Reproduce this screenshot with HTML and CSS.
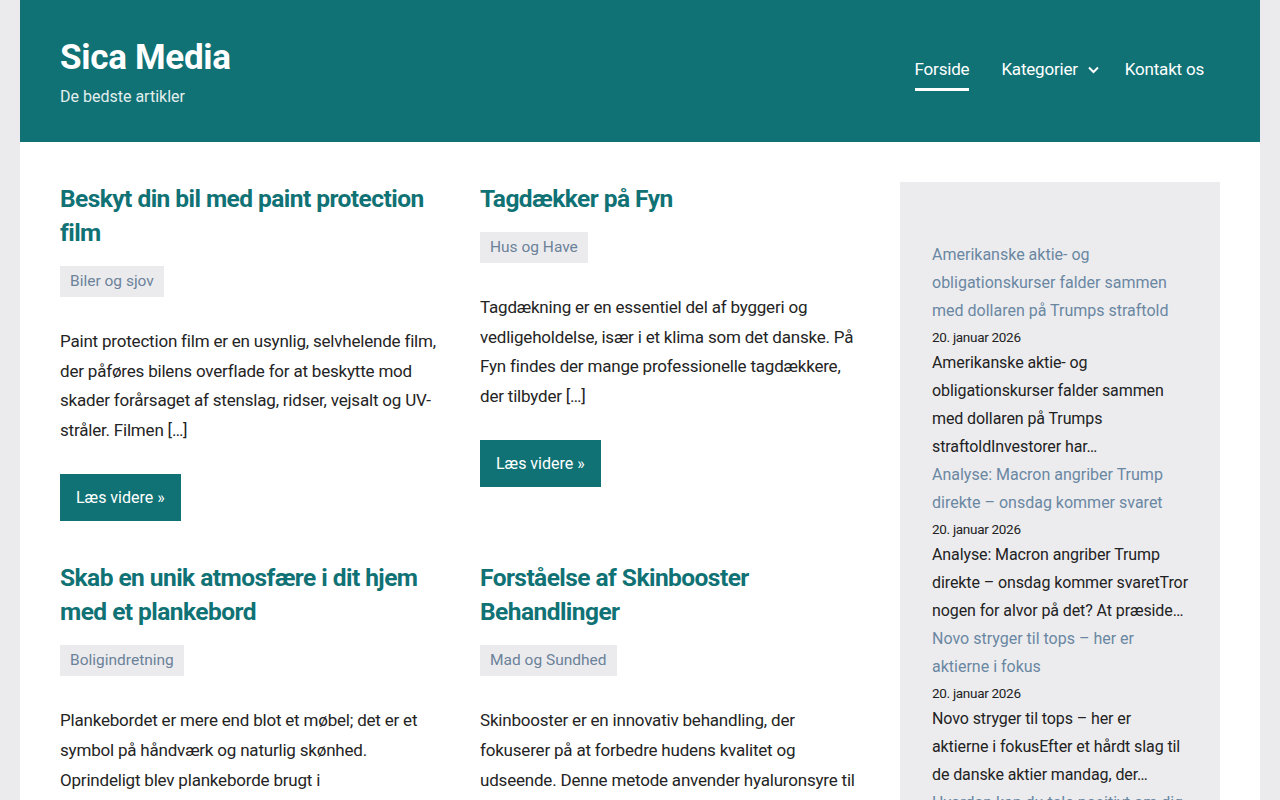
FILE: index.html
```html
<!DOCTYPE html>
<html lang="da">
<head>
<meta charset="utf-8">
<title>Sica Media</title>
<link rel="stylesheet" href="styles.css">
</head>
<body>
<div class="page">
  <header class="site-header">
    <div class="branding">
      <div class="site-title">Sica Media</div>
      <div class="site-desc">De bedste artikler</div>
    </div>
    <nav class="main-nav">
      <a class="nav-item current" href="#">Forside</a>
      <a class="nav-item has-sub" href="#">Kategorier
        <svg class="chev" width="11" height="8" viewBox="0 0 11 8"><path d="M1 1.5 L5.5 6 L10 1.5" fill="none" stroke="#fff" stroke-width="2"/></svg>
      </a>
      <a class="nav-item" href="#">Kontakt os</a>
    </nav>
  </header>
  <div class="content">
    <main class="posts">
      <article class="post">
        <h2 class="post-title">Beskyt din bil med paint protection film</h2>
        <div class="post-meta"><span class="cat">Biler og sjov</span></div>
        <p class="excerpt">Paint protection film er en usynlig, selvhelende film, der påføres bilens overflade for at beskytte mod skader forårsaget af stenslag, ridser, vejsalt og UV-stråler. Filmen [&hellip;]</p>
        <a class="more" href="#">Læs videre »</a>
      </article>
      <article class="post">
        <h2 class="post-title">Tagdækker på Fyn</h2>
        <div class="post-meta"><span class="cat">Hus og Have</span></div>
        <p class="excerpt">Tagdækning er en essentiel del af byggeri og vedligeholdelse, især i et klima som det danske. På Fyn findes der mange professionelle tagdækkere, der tilbyder [&hellip;]</p>
        <a class="more" href="#">Læs videre »</a>
      </article>
      <article class="post">
        <h2 class="post-title">Skab en unik atmosfære i dit hjem med et plankebord</h2>
        <div class="post-meta"><span class="cat">Boligindretning</span></div>
        <p class="excerpt">Plankebordet er mere end blot et møbel; det er et symbol på håndværk og naturlig skønhed. Oprindeligt blev plankeborde brugt i landbrugsbygninger og [&hellip;]</p>
        <a class="more" href="#">Læs videre »</a>
      </article>
      <article class="post">
        <h2 class="post-title">Forståelse af Skinbooster Behandlinger</h2>
        <div class="post-meta"><span class="cat">Mad og Sundhed</span></div>
        <p class="excerpt">Skinbooster er en innovativ behandling, der fokuserer på at forbedre hudens kvalitet og udseende. Denne metode anvender hyaluronsyre til at [&hellip;]</p>
        <a class="more" href="#">Læs videre »</a>
      </article>
    </main>
    <aside class="sidebar">
      <ul class="news">
        <li>
          <a class="news-title" href="#">Amerikanske aktie- og obligationskurser falder sammen med dollaren på Trumps straftold</a>
          <div class="news-date">20. januar 2026</div>
          <div class="news-text">Amerikanske aktie- og obligationskurser falder sammen med dollaren på Trumps straftoldInvestorer har…</div>
        </li>
        <li>
          <a class="news-title" href="#">Analyse: Macron angriber Trump direkte – onsdag kommer svaret</a>
          <div class="news-date">20. januar 2026</div>
          <div class="news-text">Analyse: Macron angriber Trump direkte – onsdag kommer svaretTror nogen for alvor på det? At præside…</div>
        </li>
        <li>
          <a class="news-title" href="#">Novo stryger til tops – her er aktierne i fokus</a>
          <div class="news-date">20. januar 2026</div>
          <div class="news-text">Novo stryger til tops – her er aktierne i fokusEfter et hårdt slag til de danske aktier mandag, der…</div>
        </li>
        <li>
          <a class="news-title" href="#">Hvordan kan du tale positivt om dig selv?</a>
          <div class="news-date">20. januar 2026</div>
          <div class="news-text">Hvordan kan du tale positivt om dig selv?…</div>
        </li>
      </ul>
    </aside>
  </div>
</div>
</body>
</html>
```

FILE: styles.css
```css
* { box-sizing: border-box; }
html, body { margin: 0; padding: 0; }
body {
  background: #ebebee;
  font-family: Roboto, "Liberation Sans", sans-serif;
  color: #222;
  overflow: hidden;
  height: 800px;
}
a { text-decoration: none; }
.page {
  margin: 0 20px;
  background: #fff;
  min-height: 800px;
}
.site-header {
  background: #107275;
  height: 142px;
  display: flex;
  justify-content: space-between;
  align-items: flex-start;
  padding: 0 56px 0 40px;
}
.branding { padding-top: 36px; }
.site-title {
  color: #fff;
  font-weight: 700;
  font-size: 35px;
  line-height: 44px;
  letter-spacing: -0.3px;
}
.site-desc {
  color: #e3eeee;
  font-size: 16px;
  line-height: 22px;
  margin-top: 6px;
}
.main-nav {
  display: flex;
  align-items: flex-start;
  gap: 32px;
  padding-top: 57px;
}
.nav-item {
  color: #fff;
  font-size: 17px;
  line-height: 24px;
  display: flex;
  align-items: center;
  gap: 10px;
  padding-bottom: 7px;
  border-bottom: 3px solid transparent;
  letter-spacing: -0.2px;
}
.nav-item.has-sub { margin-right: -6px; }
.nav-item.current { border-bottom-color: #fff; }
.chev { margin-top: 1px; }
.content {
  display: flex;
  align-items: flex-start;
  gap: 40px;
  padding: 40px;
}
.posts {
  flex: 1;
  display: grid;
  grid-template-columns: 1fr 1fr;
  column-gap: 40px;
  row-gap: 40px;
  align-items: start;
  align-content: start;
}
.post { min-width: 0; }
.post-title {
  margin: 0;
  color: #107275;
  font-size: 24.5px;
  line-height: 34px;
  font-weight: 700;
  letter-spacing: -0.55px;
}
.post-meta { margin-top: 16px; }
.cat {
  display: inline-block;
  background: #ebebee;
  color: #6b8299;
  font-size: 15.5px;
  line-height: 31px;
  padding: 0 10px;
}
.excerpt {
  margin: 30px 0 0;
  font-size: 17px;
  line-height: 29.6px;
  color: #242424;
  letter-spacing: -0.2px;
}
.more {
  display: inline-block;
  margin-top: 29px;
  background: #107275;
  color: #fff;
  font-size: 16px;
  line-height: 47px;
  padding: 0 16px;
  vertical-align: top;
}
.sidebar {
  width: 320px;
  flex: none;
  background: #ececef;
  padding: 59px 31px 32px 32px;
  min-height: 700px;
}
.news { list-style: none; margin: 0; padding: 0; }
.news li { margin: 0; }
.news-title {
  display: block;
  color: #6a87a2;
  font-size: 16px;
  line-height: 28px;
}
.news-date {
  font-size: 13.5px;
  line-height: 24px;
  color: #222;
  letter-spacing: -0.3px;
}
.news-text {
  font-size: 16px;
  line-height: 28px;
  color: #222;
  letter-spacing: -0.1px;
}
```
